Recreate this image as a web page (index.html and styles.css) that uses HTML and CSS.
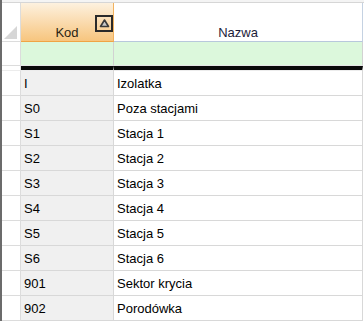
FILE: index.html
```html
<!DOCTYPE html>
<html>
<head>
<meta charset="utf-8">
<link rel="stylesheet" href="styles.css">
</head>
<body>
<div class="table">
  <div class="topline"></div>
  <div class="row head">
    <div class="corner"><span class="tri"></span></div>
    <div class="hcell kod">Kod
      <span class="sort"><svg width="13" height="13" viewBox="0 0 13 13"><polygon points="6.5,3 10.5,9.5 2.5,9.5" fill="#c8c8c8" stroke="#3a3a3a" stroke-width="1.6" stroke-linejoin="round"/></svg></span>
    </div>
    <div class="hcell nazwa">Nazwa</div>
  </div>
  <div class="row filter">
    <div class="rh"></div>
    <div class="fcell kodf"></div>
    <div class="fcell"></div>
  </div>
  <div class="row sep">
    <div class="rh"></div>
    <div class="bar"></div>
    <div class="bar"></div>
  </div>
  <div class="row data"><div class="rh"></div><div class="c kodc">I</div><div class="c">Izolatka</div></div>
  <div class="row data"><div class="rh"></div><div class="c kodc">S0</div><div class="c">Poza stacjami</div></div>
  <div class="row data"><div class="rh"></div><div class="c kodc">S1</div><div class="c">Stacja 1</div></div>
  <div class="row data"><div class="rh"></div><div class="c kodc">S2</div><div class="c">Stacja 2</div></div>
  <div class="row data"><div class="rh"></div><div class="c kodc">S3</div><div class="c">Stacja 3</div></div>
  <div class="row data"><div class="rh"></div><div class="c kodc">S4</div><div class="c">Stacja 4</div></div>
  <div class="row data"><div class="rh"></div><div class="c kodc">S5</div><div class="c">Stacja 5</div></div>
  <div class="row data"><div class="rh"></div><div class="c kodc">S6</div><div class="c">Stacja 6</div></div>
  <div class="row data"><div class="rh"></div><div class="c kodc">901</div><div class="c">Sektor krycia</div></div>
  <div class="row data"><div class="rh"></div><div class="c kodc">902</div><div class="c">Porodówka</div></div>
</div>
</body>
</html>
```

FILE: styles.css
```css
* { box-sizing: border-box; }
html, body { margin: 0; padding: 0; background: #ffffff; overflow: hidden; }
body {
  width: 364px;
  height: 321px;
  font-family: "Liberation Sans", Arial, sans-serif;
  font-size: 13px;
  color: #000000;
}
.table {
  height: 321px;
  border-left: 2px solid #6b6b6b;
  display: flex;
  flex-direction: column;
}
.topline {
  height: 3px;
  background: #f4f4f4;
  border-bottom: 1px solid #d6d6d6;
}
.row {
  display: grid;
  grid-template-columns: 19px 93px 249px;
}
.head { height: 40px; }
.corner {
  position: relative;
  background: #ffffff;
  border-right: 1px solid #dcdcdc;
  border-bottom: 1px solid #dcdcdc;
}
.tri {
  position: absolute;
  right: 3px;
  bottom: 2px;
  width: 0;
  height: 0;
  border-left: 13px solid transparent;
  border-bottom: 13px solid #d6d6d6;
}
.hcell {
  display: flex;
  align-items: flex-end;
  justify-content: center;
  padding-bottom: 1px;
  line-height: 15px;
}
.kod {
  position: relative;
  background: linear-gradient(#fdf1df, #f7c57e);
  border-right: 1px solid #f2b25e;
  border-bottom: 1px solid #f0a445;
  color: #2a1e12;
}
.nazwa {
  background: #ffffff;
  border-right: 1px solid #c5d2e2;
  border-bottom: 1px solid #b8c8dc;
  color: #1c1c3a;
}
.sort {
  position: absolute;
  top: 12px;
  right: 0;
  width: 18px;
  height: 17px;
  border: 2px solid #2a2a2a;
  display: flex;
  align-items: center;
  justify-content: center;
}
.filter { height: 25px; }
.rh {
  background: #ffffff;
  border-right: 1px solid #dcdcdc;
  border-bottom: 1px solid #dcdcdc;
}
.fcell {
  background: #dcf8dc;
  border-right: 1px solid #d2d2d2;
  border-bottom: 1px solid #e6e6e6;
}
.sep { height: 5px; }
.sep .rh { border-bottom: 1px solid #ececec; }
.bar {
  border-top: 4px solid #0a0a0a;
  border-right: 1px solid #bdbdbd;
  border-bottom: 1px solid #ececec;
  background: #ffffff;
}
.data { height: 25px; flex: none; }
.c {
  background: #ffffff;
  border-right: 1px solid #d8d8d8;
  border-bottom: 1px solid #d8d8d8;
  padding: 1px 0 0 3px;
  line-height: 23px;
  white-space: nowrap;
  overflow: hidden;
}
.kodc { background: #f0f0f0; }
```
